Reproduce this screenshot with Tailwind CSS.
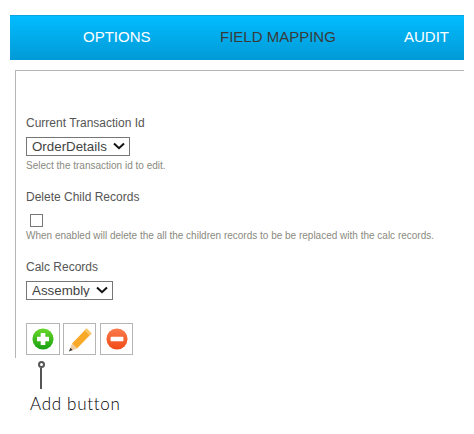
<!DOCTYPE html>
<html lang="en">
<head>
    <meta charset="UTF-8">
    <meta name="viewport" content="width=device-width, initial-scale=1.0">
    <title>Field Mapping</title>
    <script src="https://cdn.jsdelivr.net/npm/@tailwindcss/browser@4"></script>
</head>
<body class="bg-white min-h-screen overflow-hidden font-['Liberation_Sans',Arial,sans-serif]">

    <div class="w-[454px] ml-[10px] pt-[15px]">

        <!-- Navigation -->
        <nav class="h-[45px] flex items-center pl-[73px] pb-[2px] text-[15px] text-white border-t border-[#0aa4e0] bg-gradient-to-b from-[#02bcff] to-[#019ad6] whitespace-nowrap">
            <span class="w-[137px]">OPTIONS</span>
            <span class="w-[184px] text-[#3a3a3a]">FIELD MAPPING</span>
            <span>AUDIT</span>
        </nav>

        <!-- Form panel -->
        <div class="mt-[10px] ml-[5px] h-[288px] border-l border-t border-[#b5b5b5] pl-[10px] pt-[45px] text-[#555]">

            <div class="text-xs leading-[14px]">Current Transaction Id</div>
            <div class="relative mt-[7px] w-[104px] h-[19px]">
                <select class="appearance-none block w-full h-full border border-[#767676] text-[13.33px] leading-none text-[#444] bg-white pl-[5px]">
                    <option>OrderDetails</option>
                </select>
                <svg class="absolute right-[5px] top-[5px]" width="12" height="8" viewBox="0 0 12 8"><path d="M1 1.5 6 6.2 11 1.5" fill="none" stroke="#111" stroke-width="2"/></svg>
            </div>
            <p class="mt-[4px] text-[10px] leading-[12px] text-[#8a8a80]">Select the transaction id to edit.</p>

            <div class="mt-[18px] text-xs leading-[14px]">Delete Child Records</div>
            <input type="checkbox" class="block mt-[10px] ml-[4px] w-[13px] h-[13px] appearance-none border border-[#767676] bg-white">
            <p class="mt-[3px] text-[10px] leading-[12px] text-[#8a8a80] whitespace-nowrap">When enabled will delete the all the children records to be be replaced with the calc records.</p>

            <div class="mt-[18px] text-xs leading-[14px]">Calc Records</div>
            <div class="relative mt-[7px] w-[87px] h-[19px]">
                <select class="appearance-none block w-full h-full border border-[#767676] text-[13.33px] leading-none text-[#444] bg-white pl-[5px]">
                    <option>Assembly</option>
                </select>
                <svg class="absolute right-[5px] top-[5px]" width="12" height="8" viewBox="0 0 12 8"><path d="M1 1.5 6 6.2 11 1.5" fill="none" stroke="#111" stroke-width="2"/></svg>
            </div>

            <!-- Action buttons -->
            <div class="mt-[23px] flex">
                <button class="w-[34px] h-[32px] border border-[#b5b5b5] flex items-center justify-center">
                    <svg width="22" height="22" viewBox="0 0 24 24">
                        <defs>
                            <linearGradient id="addFill" x1="0" y1="0" x2="0" y2="1">
                                <stop offset="0" stop-color="#6ad82a"/>
                                <stop offset="1" stop-color="#18a012"/>
                            </linearGradient>
                        </defs>
                        <circle cx="12" cy="12" r="11.5" fill="url(#addFill)"/>
                        <path d="M9.5 5.5h5v4h4v5h-4v4h-5v-4h-4v-5h4z" fill="#fff"/>
                    </svg>
                </button>
                <button class="ml-[3px] w-[33px] h-[32px] border border-[#b5b5b5] flex items-center justify-center">
                    <svg width="24" height="25" viewBox="0 0 24 25">
                        <path d="M4 16.5 18.5 1.5 23.5 6.5 9 21.5z" fill="#f8a928"/>
                        <path d="M16.5 3.6 18.5 1.5 23.5 6.5 21.5 8.6z" fill="#fbc565"/>
                        <path d="M4 16.5 9 21.5 1 24.5z" fill="#eecb9f"/>
                        <path d="M2.4 20.8 4.6 23 1 24.5z" fill="#333"/>
                    </svg>
                </button>
                <button class="ml-[4px] w-[33px] h-[32px] border border-[#b5b5b5] flex items-center justify-center">
                    <svg width="22" height="22" viewBox="0 0 24 24">
                        <defs>
                            <linearGradient id="removeFill" x1="0" y1="0" x2="0" y2="1">
                                <stop offset="0" stop-color="#fb7b4c"/>
                                <stop offset="1" stop-color="#f14a17"/>
                            </linearGradient>
                        </defs>
                        <circle cx="12" cy="12" r="11.5" fill="url(#removeFill)"/>
                        <rect x="5" y="9.5" width="14" height="5" rx="1" fill="#fff"/>
                    </svg>
                </button>
            </div>
        </div>

        <!-- Callout -->
        <div class="ml-[20px] mt-[3px] w-[90px]">
            <div class="ml-[8px] w-[7px] h-[7px] rounded-full border-2 border-[#555]"></div>
            <div class="ml-[10px] w-[2px] h-[21px] bg-[#555]"></div>
            <div class="mt-[5px] text-[17px] leading-[20px] tracking-[0.7px] font-light text-black whitespace-nowrap font-['Lato',sans-serif]">Add button</div>
        </div>
    </div>

</body>
</html>
